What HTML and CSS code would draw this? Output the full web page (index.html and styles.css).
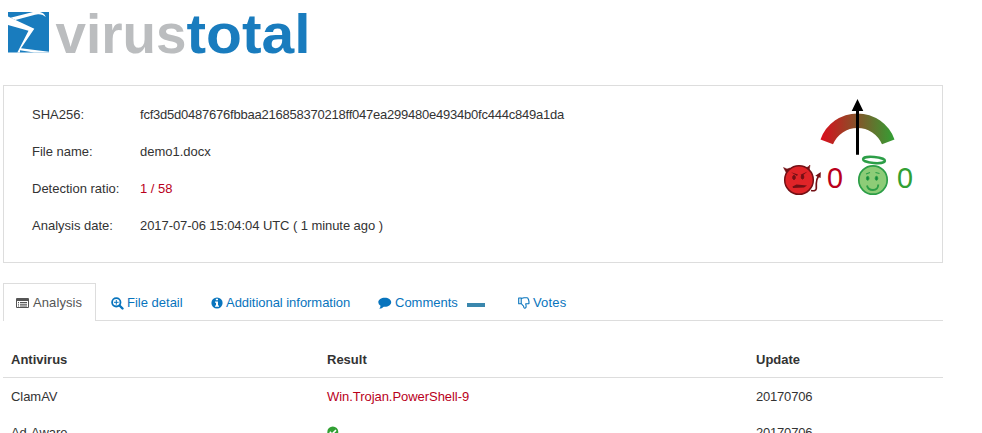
FILE: index.html
```html
<!DOCTYPE html>
<html lang="en">
<head>
<meta charset="utf-8">
<title>VirusTotal</title>
<link rel="stylesheet" href="styles.css">
</head>
<body>
<header>
<svg class="logo" width="313" height="70" viewBox="3 0 313 70">
<path fill="#197cbe" d="M8 12h41v40.500H8z"/>
<g fill="#fff">
<path d="M8 16.500L34.300 28.700 21 48.300 49 51.800V52.600H34L20 50.300V52.600H17.300L28.500 30.700 8 25z"/>
<path d="M10.500 17.700L33 12H40Q44.500 13 45.700 17.200 43 14 38 14.200L35 14.800 15.500 20z"/>
</g>
<text class="virus" x="55.500" y="52.500" textLength="131" lengthAdjust="spacingAndGlyphs">virus</text>
<text class="total" x="186.500" y="52.500" textLength="124" lengthAdjust="spacingAndGlyphs">total</text>
</svg>
</header>
<main>
<section class="summary">
<dl>
<dt>SHA256:</dt><dd class="hash">fcf3d5d0487676fbbaa216858370218ff047ea299480e4934b0fc444c849a1da</dd>
<dt>File name:</dt><dd>demo1.docx</dd>
<dt>Detection ratio:</dt><dd class="bad">1 / 58</dd>
<dt>Analysis date:</dt><dd class="date">2017-07-06 15:04:04 UTC ( 1 minute ago )</dd>
</dl>
<svg class="votes" width="136" height="106" viewBox="780 94 136 106">
<defs><linearGradient id="g"><stop stop-color="#db0d1c"/><stop offset=".5" stop-color="#83552a"/><stop offset="1" stop-color="#32a034"/></linearGradient></defs>
<path fill="url(#g)" d="M820.500 139.500A39.300 39.300 0 0 1 894.500 139.500L882 144.300A26.500 26.500 0 0 0 833 144.300Z"/>
<path d="M856 154.700V111h-4.300l5.800-12 5.800 12H859v43.700z"/>
<g stroke="#731015">
<path fill="#731015" d="M783.500 167.500l3.500 1.500 3-1-3 6zM810 165l-1 6-5-3 4-1z" stroke-width=".5"/>
<circle cx="799" cy="180" r="14.300" fill="#e02428" stroke-width="1.500"/>
<path fill="none" stroke-width="1.700" d="M811 190.500q5 1 5.300-2v-5q0-4 2-7"/>
<path fill="#731015" stroke="none" d="M820.800 172l-.2 6-5.300-2.200zM791 172.300l7 2.300-1 1.500zM807.500 171.500l-7 3.300 1.500 1.200zM792.500 186.500l4-2 10.500 1-3 2-11 .5z"/>
<ellipse cx="794" cy="177.500" rx="1.300" ry="2" fill="#731015"/><ellipse cx="802.500" cy="177" rx="1.300" ry="2" fill="#731015"/>
</g>
<g stroke="#2c9e47" fill="none">
<circle cx="873" cy="180" r="14.200" fill="#8dcc77" stroke-width="1.700"/>
<ellipse cx="874" cy="160" rx="11" ry="3" stroke-width="2.400" transform="rotate(5 874 160)"/>
<path stroke-width="1.900" d="M867 185.500q1 4.500 6 4.500t5.300-5.500"/>
<path stroke-width="1.100" d="M866 174l4-1.500M875.500 172.500l4 1"/>
<ellipse cx="867.700" cy="178.300" rx="1.300" ry="2" fill="#15863c"/><ellipse cx="876.500" cy="178.300" rx="1.300" ry="2" fill="#15863c"/>
</g>
<text x="827" y="187.500" fill="#b9001b" textLength="16" lengthAdjust="spacingAndGlyphs">0</text>
<text x="897" y="187.500" fill="#31a033" textLength="16" lengthAdjust="spacingAndGlyphs">0</text>
</svg>
</section>
<nav>
<a class="active"><svg class="list" width="14" height="12" viewBox="0 0 14 12"><path fill="currentColor" fill-rule="evenodd" d="M1 1h11q1 0 1 1v8q0 1-1 1H1q-1 0-1-1V2q0-1 1-1zM1 4v6h11V4zM2 5h1v1H2zM4 5h7v1H4zM2 6.700h1v1H2zM4 6.700h7v1H4zM2 8.400h1v1H2zM4 8.400h7v1H4z"/></svg>Analysis</a>
<a class="file"><svg width="13" height="13" viewBox="0 0 13 13"><g fill="none" stroke="currentColor"><circle cx="5.300" cy="5.300" r="4.200" stroke-width="1.800"/><path d="M8.500 8.500l3 3" stroke-width="2.400" stroke-linecap="round"/><path d="M5.300 3v4.600M3 5.300h4.600"/></g></svg>File detail</a>
<a class="info"><svg width="12" height="12" viewBox="0 0 12 12"><circle cx="6" cy="6" r="5.600" fill="currentColor"/><path fill="#fff" d="M4.800 1.700h2.200v1.600H4.800zM4 4.500h3v4h1v1.300H4V8.500h1V5.700H4z"/></svg>Additional information</a>
<a class="comments"><svg width="14" height="12" viewBox="0 0 14 12"><path fill="currentColor" d="M6.800 .8C10.400 .8 13.200 2.600 13.200 5.300S10.400 9.800 6.800 9.800l-1.100-.1Q4 11.500 1.300 11.800q1.300-1.300 1.200-3Q.3 7.500.3 5.300C.3 2.600 3.200.8 6.800.8z"/></svg>Comments<i class="badge"></i></a>
<a class="vote"><svg width="12" height="12" viewBox="0 0 12 12"><path fill="none" stroke="currentColor" stroke-width="1.100" stroke-linejoin="round" d="M.7 1h2.500v5.800H.7zM3.200 1.500L6 .8h3q1.200.1 1.100 1.200.8.600.5 1.400.7.800.2 1.500.8 1.700-.7 1.900H7.700q1 3.500-.3 4.300-1 .4-1.500-.7-.2-1.600-1.300-2.300L3.200 6.500"/></svg>Votes</a>
</nav>
<table>
<thead><tr><th>Antivirus</th><th>Result</th><th>Update</th></tr></thead>
<tbody>
<tr><td>ClamAV</td><td class="bad">Win.Trojan.PowerShell-9</td><td>20170706</td></tr>
<tr class="clean"><td>Ad-Aware</td><td><svg class="check" width="12" height="12" viewBox="0 0 12 12"><circle cx="5.800" cy="6" r="5.500" fill="#31a033"/><path d="M2.800 5.800l2.200 2.300 4-4" fill="none" stroke="#fff" stroke-width="1.600"/></svg></td><td>20170706</td></tr>
</tbody>
</table>
</main>
</body>
</html>
```
FILE: styles.css
```css
* { box-sizing: border-box; }
html { overflow: hidden; }
body { margin: 0; height: 433px; overflow: hidden; background: #fff; color: #333; font: 13px/18px "Liberation Sans", Arial, sans-serif; }
header { height: 85px; padding-left: 3px; }
.logo { display: block; overflow: visible; }
.logo text { font: 700 55px "Liberation Sans", Arial, sans-serif; }
.virus { fill: #bbbdbf; }
.total { fill: #197cbe; }
main { width: 940px; margin-left: 3px; }
.summary { height: 178px; display: flex; justify-content: space-between; border: 1px solid #ddd; padding: 8px 26px 0 28px; }
dl { display: grid; grid-template-columns: 108px auto; grid-auto-rows: 37px; line-height: 41px; margin: 0; white-space: nowrap; }
dd { margin: 0; }
.hash { letter-spacing: -.228px; }
.date { letter-spacing: -.07px; }
.bad { color: #b9001b; }
.votes text { font: 30px "Liberation Sans", sans-serif; }
nav { display: flex; height: 38px; margin-top: 20px; border-bottom: 1px solid #ddd; color: #0874bd; }
nav a { display: flex; align-items: center; height: 38px; padding-top: 2px; white-space: nowrap; }
nav svg { margin-right: 3px; flex: none; }
nav .active { width: 93px; border: 1px solid #ddd; border-bottom: 0; padding: 0 0 0 12px; color: #555; background: #fff; letter-spacing: .1px; }
.file { margin-left: 15px; width: 100px; }
.info { width: 167px; letter-spacing: -.04px; }
.comments { width: 140px; }
.vote { letter-spacing: .15px; }
.badge { width: 18px; height: 4px; margin: 4px 0 0 9px; background: #3a87ad; }
table { width: 940px; table-layout: fixed; border-collapse: separate; border-spacing: 0; margin-top: 20px; }
th, td { height: 37px; padding: 0 8px; text-align: left; vertical-align: middle; }
th { padding-top: 2px; border-bottom: 1px solid #ddd; }
td { padding-top: 1px; letter-spacing: -.05px; }
.clean td { padding: 0 8px 1px; }
td:last-child { letter-spacing: -.2px; }
th:first-child { width: 316px; }
th:nth-child(2) { width: 429px; }
.check { display: block; margin-bottom: 3px; }
```
